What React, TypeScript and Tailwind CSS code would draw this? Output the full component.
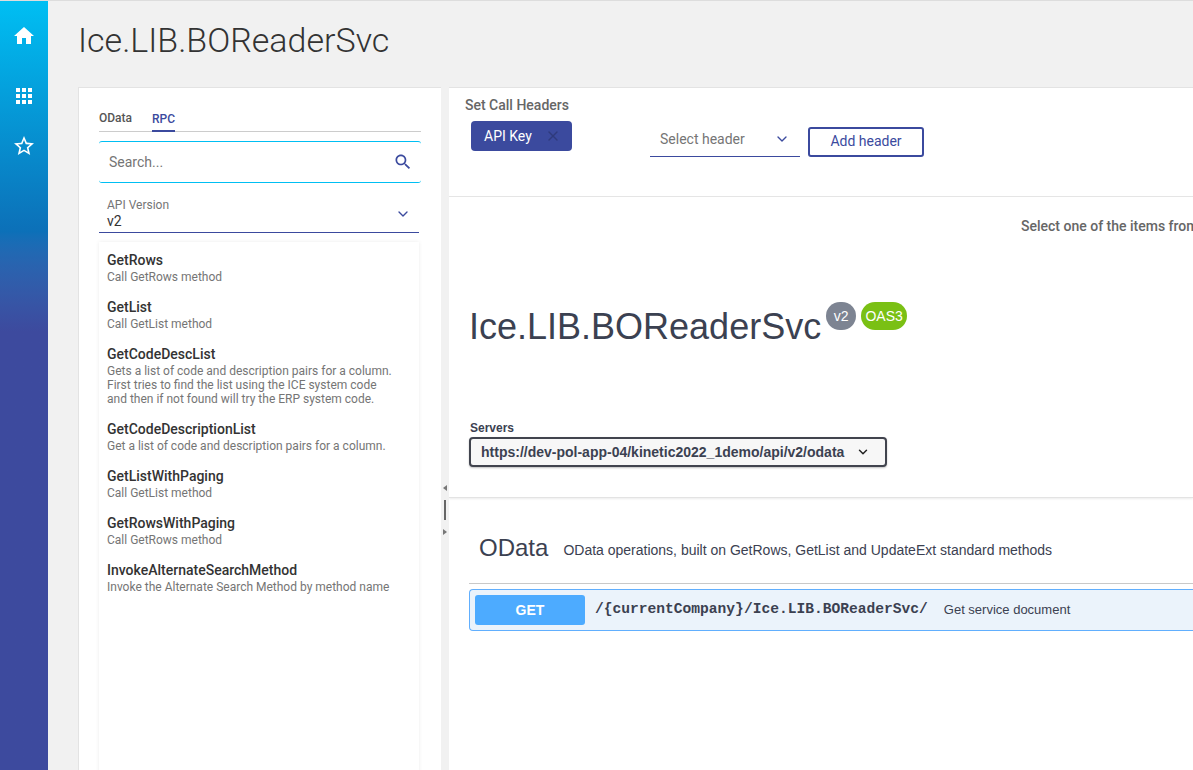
import { ChevronDown, X } from 'lucide-react'

const methods = [
  { name: 'GetRows', desc: ['Call GetRows method'] },
  { name: 'GetList', desc: ['Call GetList method'] },
  {
    name: 'GetCodeDescList',
    desc: [
      'Gets a list of code and description pairs for a column.',
      'First tries to find the list using the ICE system code',
      'and then if not found will try the ERP system code.',
    ],
  },
  { name: 'GetCodeDescriptionList', desc: ['Get a list of code and description pairs for a column.'] },
  { name: 'GetListWithPaging', desc: ['Call GetList method'] },
  { name: 'GetRowsWithPaging', desc: ['Call GetRows method'] },
  { name: 'InvokeAlternateSearchMethod', desc: ['Invoke the Alternate Search Method by method name'] },
]

function Sidebar() {
  return (
    <aside className="w-12 shrink-0 h-full flex flex-col items-center pt-[23px] bg-gradient-to-b from-[#00bff3] via-[#0c70b8] via-[30%] to-[#3d4a9e] to-[43%]">
      <svg viewBox="0 0 24 24" className="w-6 h-6 fill-white">
        <path d="M10 20v-6h4v6h5v-8h3L12 3 2 12h3v8z" />
      </svg>
      <svg viewBox="0 0 24 24" className="w-6 h-6 fill-white mt-9">
        <path d="M4 8h4V4H4v4zm6 12h4v-4h-4v4zm-6 0h4v-4H4v4zm0-6h4v-4H4v4zm6 0h4v-4h-4v4zm6-10v4h4V4h-4zm-6 4h4V4h-4v4zm6 6h4v-4h-4v4zm0 6h4v-4h-4v4z" />
      </svg>
      <svg viewBox="0 0 24 24" className="w-6 h-6 fill-white mt-[26px]">
        <path d="M22 9.24l-7.19-.62L12 2 9.19 8.63 2 9.24l5.46 4.73L5.82 21 12 17.27 18.18 21l-1.63-7.03L22 9.24zM12 15.4l-3.76 2.27 1-4.28-3.32-2.88 4.38-.38L12 6.1l1.71 4.04 4.38.38-3.32 2.88 1 4.28L12 15.4z" />
      </svg>
    </aside>
  )
}

function LeftPanel() {
  return (
    <section className="w-[363px] shrink-0 h-full bg-white border-t border-l border-[#e3e3e3] pl-5 pr-[22px]">
      <div className="flex gap-5 border-b border-[#cccccc] h-[44px] mr-[-2px] items-end text-xs font-medium">
        <span className="text-[#555] pb-[5px]">OData</span>
        <span className="text-[#3b4a9e] pb-[3px] border-b-2 border-[#3b4a9e] -mb-px">RPC</span>
      </div>
      <div className="mt-[9px] mr-[-2px] h-[42px] flex items-center justify-between rounded-[3px] border-y border-[#00bff3] pl-2.5 pr-2">
        <span className="text-sm text-[#757575]">Search...</span>
        <svg viewBox="0 0 24 24" className="w-5 h-5 fill-[#3b4a9e]">
          <path d="M15.5 14h-.79l-.28-.27C15.41 12.59 16 11.11 16 9.5 16 5.91 13.09 3 9.5 3S3 5.91 3 9.5 5.91 16 9.5 16c1.61 0 3.09-.59 4.23-1.57l.27.28v.79l5 4.99L20.49 19l-4.99-5zm-6 0C7.01 14 5 11.99 5 9.5S7.01 5 9.5 5 14 7.01 14 9.5 11.99 14 9.5 14z" />
        </svg>
      </div>
      <div className="mt-[13px] h-[37px] flex items-center justify-between border-b border-[#3b4a9e] pl-2 pr-2">
        <div>
          <div className="text-xs leading-[14px] text-[#757575]">API Version</div>
          <div className="text-sm leading-[18px] text-[#333]">v2</div>
        </div>
        <ChevronDown className="w-4 h-4 text-[#3b4a9e]" strokeWidth={2} />
      </div>
      <ul className="mt-[9px] h-[600px] pt-[9px] px-2 shadow-[0_0_4px_rgba(0,0,0,0.08)]">
        {methods.map((m) => (
          <li key={m.name} className="pb-[14px]">
            <div className="text-sm leading-[19px] font-medium text-[#333]">{m.name}</div>
            {m.desc.map((line) => (
              <div key={line} className="text-xs leading-[14px] text-[#757575] whitespace-nowrap">
                {line}
              </div>
            ))}
          </li>
        ))}
      </ul>
    </section>
  )
}

function Splitter() {
  return (
    <div className="relative w-2 shrink-0 h-full">
      <span className="absolute left-[2px] top-[398px] border-y-[3px] border-y-transparent border-r-[4px] border-r-[#777]" />
      <span className="absolute left-[3px] top-[413px] w-[2px] h-5 bg-[#666]" />
      <span className="absolute left-[2px] top-[442px] border-y-[3px] border-y-transparent border-l-[4px] border-l-[#777]" />
    </div>
  )
}

function HeadersBar() {
  return (
    <div className="h-[110px] border-b border-[#e6e6e6] pl-4 border-t border-t-[#e3e3e3]">
      <div className="text-sm leading-4 font-medium text-[#666] pt-[9px]">Set Call Headers</div>
      <div className="flex items-start">
        <div className="ml-1.5 mt-[8px] w-[101px] h-[30px] rounded-[4px] bg-[#3b4a9e] flex items-center justify-between pl-[13px] pr-[11px] pb-px">
          <span className="text-sm text-white">API Key</span>
          <X className="w-4 h-4 text-[#2f3a7d]" strokeWidth={2} />
        </div>
        <div className="ml-[78px] mt-[8px] w-[150px] h-[36px] border-b border-[#3b4a9e] flex items-center justify-between pl-[10px] pr-2.5">
          <span className="text-sm text-[#757575]">Select header</span>
          <ChevronDown className="w-4 h-4 text-[#3b4a9e]" strokeWidth={2} />
        </div>
        <button className="ml-2 mt-[14px] w-[116px] h-[30px] rounded-[3px] border-2 border-[#3b4a9e] text-sm text-[#3b4a9e] pb-[2px]">
          Add header
        </button>
      </div>
    </div>
  )
}

function SwaggerInfo() {
  return (
    <div className="h-[301px] border-b border-[#e3e3e3] shadow-[0_1px_2px_rgba(0,0,0,0.08)] pl-5">
      <div className="pl-[552px] pt-[21px] text-sm leading-4 font-medium text-[#666] whitespace-nowrap">
        Select one of the items from the list
      </div>
      <div className="mt-[68px] flex items-start font-['Liberation_Sans',sans-serif]">
        <h1 className="text-[36px] leading-[42px] text-[#3b4151] mt-[4px]">Ice.LIB.BOReaderSvc</h1>
        <span className="ml-[5px] w-[30px] h-7 rounded-full bg-[#7d8492] text-white text-sm flex items-center justify-center">
          v2
        </span>
        <span className="ml-[5px] w-[46px] h-7 rounded-full bg-[#7ac014] text-white text-sm flex items-center justify-center">
          OAS3
        </span>
      </div>
      <div className="mt-[73px] font-['Liberation_Sans',sans-serif]">
        <div className="ml-px text-xs leading-[14px] font-bold text-[#3b4151]">Servers</div>
        <div className="mt-[2px] w-[418px] h-[30px] rounded-[4px] border-2 border-[#41444e] bg-[#f7f7f7] shadow-[0_1px_2px_rgba(0,0,0,0.25)] flex items-center justify-between pl-[10px] pr-[15px]">
          <span className="text-sm font-bold text-[#3b4151] whitespace-nowrap">
            https://dev-pol-app-04/kinetic2022_1demo/api/v2/odata
          </span>
          <ChevronDown className="w-[14px] h-[14px] text-[#222]" strokeWidth={2.5} />
        </div>
      </div>
    </div>
  )
}

function OperationsBlock() {
  return (
    <div className="pl-5 font-['Liberation_Sans',sans-serif]">
      <div className="ml-2.5 mt-[36px] flex items-center h-[28px] whitespace-nowrap">
        <span className="text-2xl text-[#3b4151]">OData</span>
        <span className="ml-[15px] mt-[4px] text-sm text-[#3b4151]">
          OData operations, built on GetRows, GetList and UpdateExt standard methods
        </span>
      </div>
      <div className="mt-[21px] border-t border-[#c9c9c9]" />
      <div className="mt-[5px] h-[42px] rounded-l-[4px] border border-r-0 border-[#61affe] bg-[#ebf3fb] flex items-center pl-[5px] whitespace-nowrap">
        <span className="w-[110px] h-[30px] rounded-[3px] bg-[#4dabff] text-white text-sm font-bold flex items-center justify-center">
          GET
        </span>
        <span className="ml-[10px] font-['Liberation_Mono',monospace] font-bold text-[14.6px] text-[#3b4151]">
          {'/{currentCompany}/Ice.LIB.BOReaderSvc/'}
        </span>
        <span className="ml-[16px] text-[13px] text-[#3b4151]">Get service document</span>
      </div>
    </div>
  )
}

export default function App() {
  return (
    <main className="w-[1193px] h-[770px] overflow-hidden flex bg-[#f1f1f1] border-t border-[#dddddd] font-['Roboto',sans-serif]">
      <Sidebar />
      <div className="flex-1 min-w-0 pl-[30px] flex flex-col">
        <h1 className="h-[86px] shrink-0 flex items-center pb-[7px] text-[34px] font-light text-[#333]">
          Ice.LIB.BOReaderSvc
        </h1>
        <div className="flex-1 min-h-0 flex">
          <LeftPanel />
          <Splitter />
          <div className="flex-1 min-w-0 h-full bg-white overflow-hidden">
            <HeadersBar />
            <SwaggerInfo />
            <OperationsBlock />
          </div>
        </div>
      </div>
    </main>
  )
}
